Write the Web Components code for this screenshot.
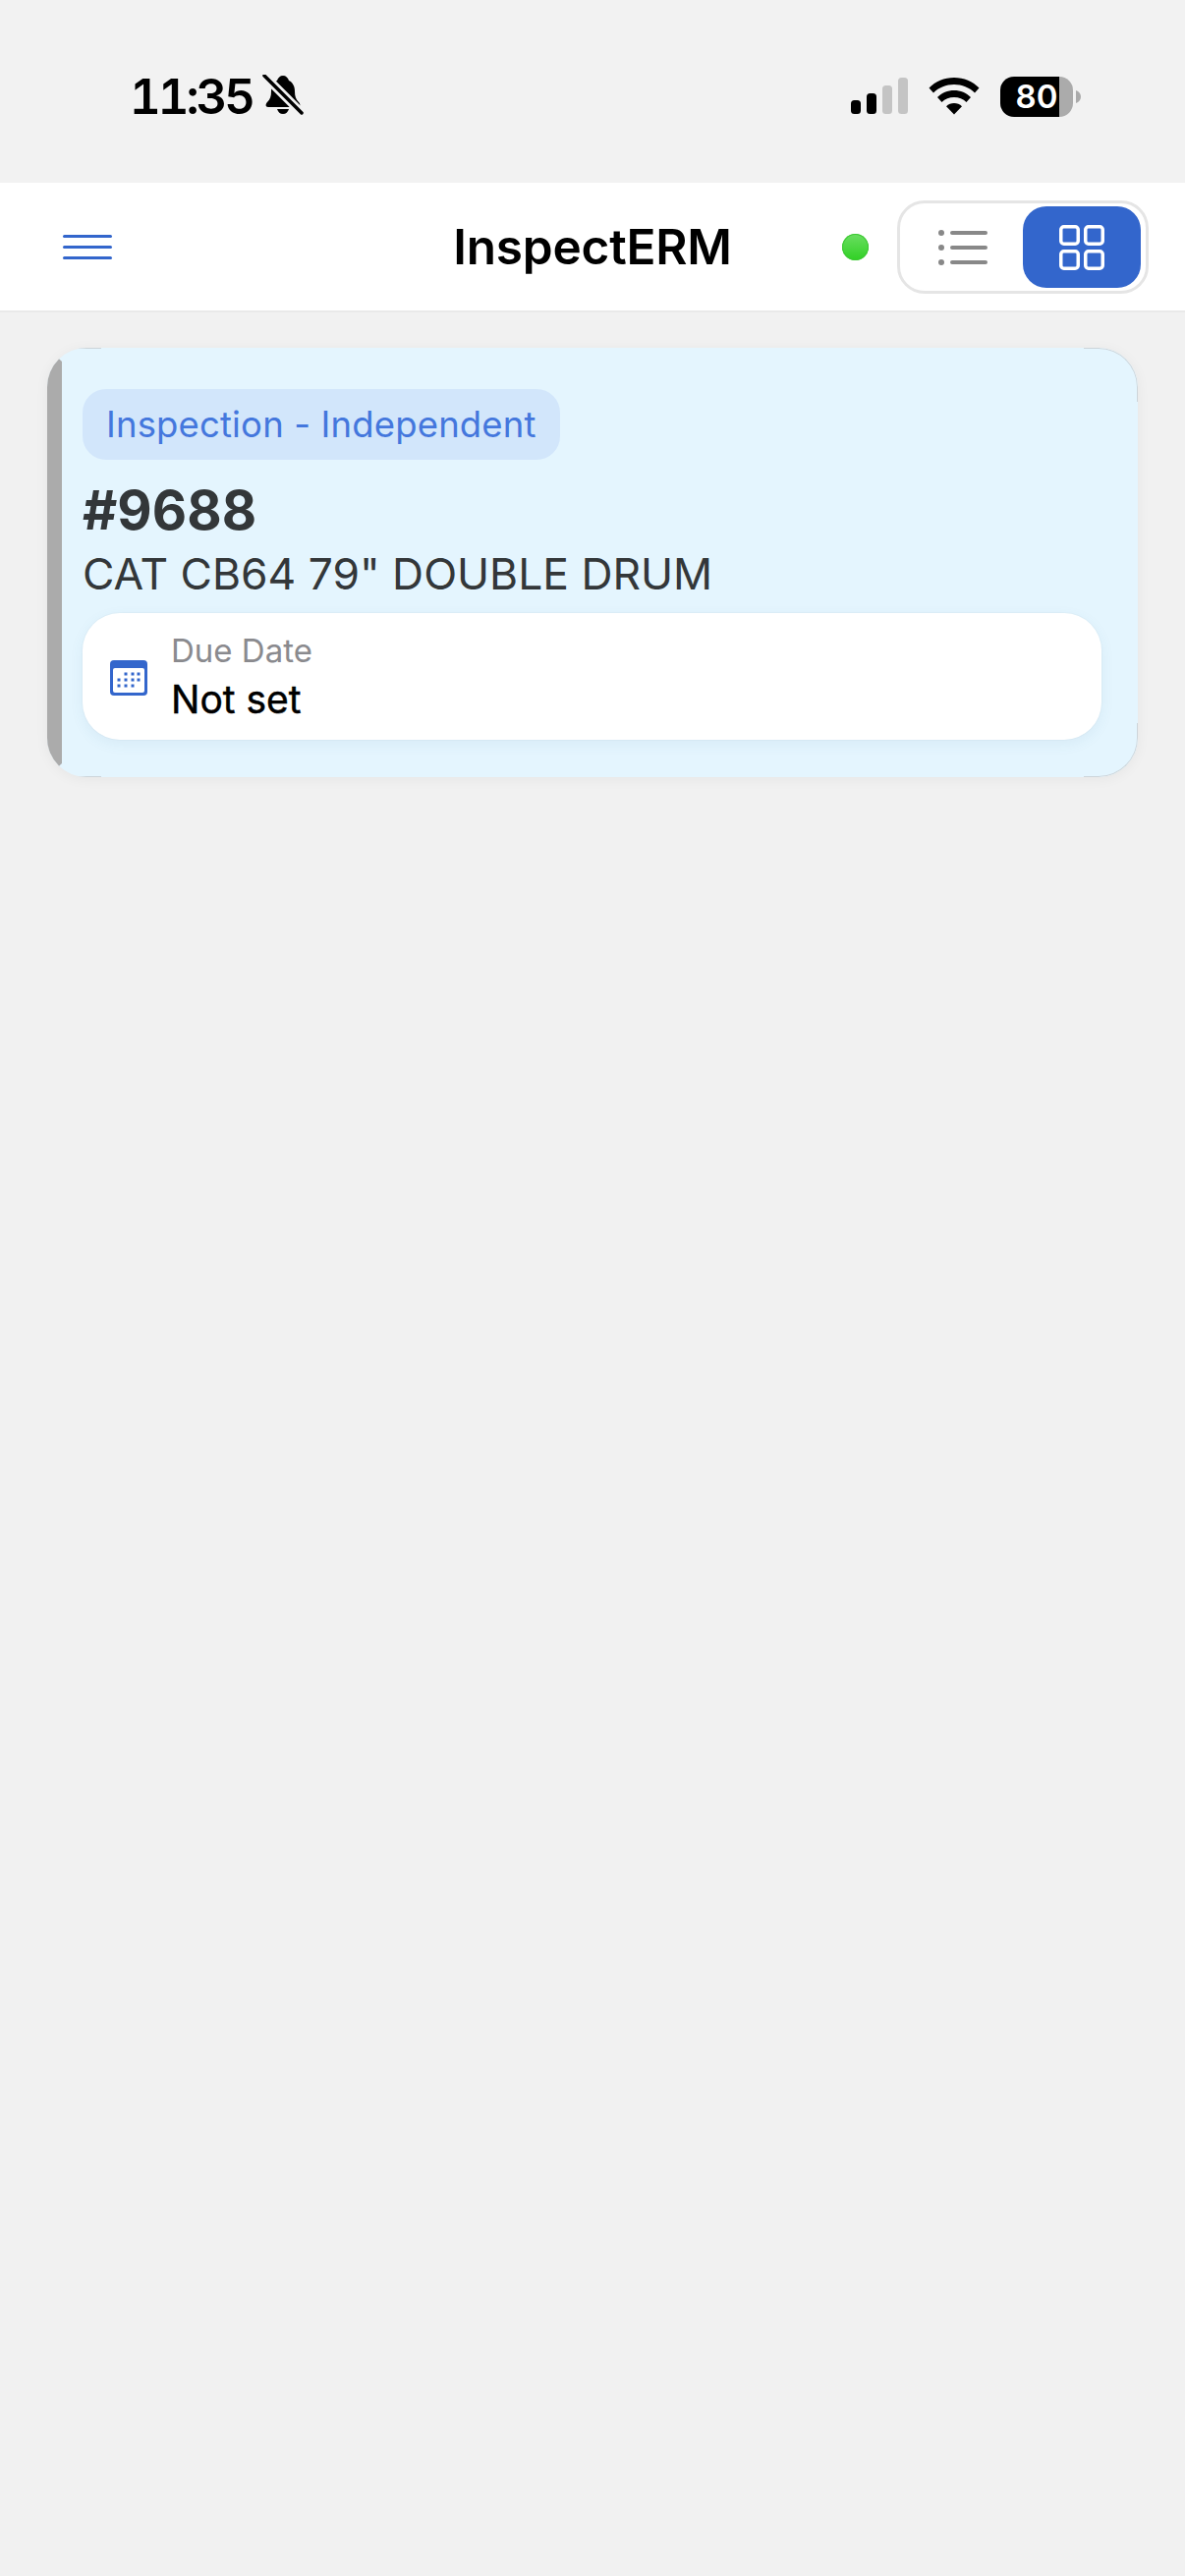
<!DOCTYPE html>
<html lang="en">
<head>
<meta charset="utf-8">
<title>InspectERM</title>
<style>
  html, body { margin: 0; padding: 0; }
  body {
    width: 1206px;
    min-height: 2622px;
    background: #f1f1f1;
    font-family: Inter, "Liberation Sans", sans-serif;
  }
</style>
</head>
<body>
<status-bar time="11:35" battery="80"></status-bar>
<app-header title="InspectERM"></app-header>
<main style="display:block;padding:36px 48px">
  <job-card tag="Inspection - Independent" number="#9688" name='CAT CB64 79" DOUBLE DRUM'>
    <info-tile label="Due Date" value="Not set"></info-tile>
  </job-card>
</main>

<script>
class StatusBar extends HTMLElement {
    connectedCallback() {
        const time = this.getAttribute("time") || "";
        const battery = this.getAttribute("battery") || "";
        this.attachShadow({ mode: "open" }).innerHTML = `
            <style>
                :host { display: flex; height: 186px; padding: 0 106px 0 132px; box-sizing: border-box; background: #f2f2f2; color: #000; justify-content: space-between; }
                .left, .right { display: flex; align-items: center; height: 196px; }
                .time { font-size: 49px; font-weight: 600; font-variant-numeric: tabular-nums; letter-spacing: -3px; line-height: 1; }
                .bell { margin-left: 10px; margin-top: -3px; }
                .right { gap: 21px; }
                .battery { position: relative; width: 74px; height: 41px; border-radius: 14px; overflow: hidden; background: linear-gradient(90deg, #000 60px, #ababab 60px); color: #fff; font-size: 33px; font-weight: 600; line-height: 41px; text-align: center; }
                .batt-wrap { display: flex; align-items: center; gap: 3px; }
            </style>
            <div class="left">
                <span class="time">${time}</span>
                <svg class="bell" width="42" height="42" viewBox="0 0 42 42">
                    <path d="M21 1c3 0 5 2 6 5 4 2 6 6 6 11 0 5 1 8 4 11 2 2 2 5-1 5H6c-3 0-3-3-1-5 3-3 4-6 4-11 0-5 2-9 6-11 1-3 3-5 6-5z" fill="#000"/>
                    <path d="M15 35h12c-1 3-3 5-6 5s-5-2-6-5z" fill="#000"/>
                    <path d="M2 1 40 39" stroke="#f2f2f2" stroke-width="9"/>
                    <path d="M2 1 40 39" stroke="#000" stroke-width="3.5" stroke-linecap="round"/>
                </svg>
            </div>
            <div class="right">
                <svg width="58" height="38" viewBox="0 0 58 38">
                    <rect x="0" y="23" width="10" height="14" rx="3.5" fill="#000"/>
                    <rect x="16" y="16" width="10" height="21" rx="3.5" fill="#000"/>
                    <rect x="32" y="8" width="10" height="29" rx="3.5" fill="#c4c4c4"/>
                    <rect x="48" y="0" width="10" height="37" rx="3.5" fill="#c4c4c4"/>
                </svg>
                <svg width="52" height="38" viewBox="0 0 52 38">
                    <path d="M26 0c10 0 19 4 25.500 10.500L47 15.500C41.500 10 34 7 26 7S10.500 10 5 15.500L.5 10.500C7 4 16 0 26 0z" fill="#000"/>
                    <path d="M26 13c6.500 0 12.500 2.500 17 7l-4.500 5c-3.300-3.200-7.700-5-12.500-5s-9.200 1.800-12.500 5L9 20c4.500-4.500 10.500-7 17-7z" fill="#000"/>
                    <path d="M26 26c3 0 5.800 1.200 8 3.200L26 37.500l-8-8.300c2.200-2 5-3.200 8-3.200z" fill="#000"/>
                </svg>
                <span class="batt-wrap">
                    <span class="battery">${battery}</span>
                    <svg width="5" height="13" viewBox="0 0 5 13"><path d="M0 0c3 1 5 3.500 5 6.500S3 12 0 13z" fill="#ababab"/></svg>
                </span>
            </div>
        `;
    }
}

class AppHeader extends HTMLElement {
    connectedCallback() {
        const title = this.getAttribute("title") || "";
        this.removeAttribute("title");
        this.attachShadow({ mode: "open" }).innerHTML = `
            <style>
                :host { display: grid; grid-template-columns: 1fr auto 1fr; align-items: center; height: 132px; box-sizing: border-box; background: #fff; border-bottom: 2px solid #e9e9e9; padding: 1px 37px 0; }
                .menu { display: flex; flex-direction: column; gap: 7.500px; width: 50px; margin-left: 27px; }
                .menu i { display: block; height: 3.500px; border-radius: 2px; background: #3366cc; }
                h1 { margin: 0; font-size: 49.500px; font-weight: 600; color: #000; line-height: 1; letter-spacing: -.2px; }
                .side { display: flex; align-items: center; justify-content: flex-end; gap: 29px; }
                .dot { width: 27px; height: 27px; border-radius: 50%; background: linear-gradient(#6bde62, #30d024); box-shadow: inset 0 0 0 1px #3cc832; }
            </style>
            <div class="menu"><i></i><i></i><i></i></div>
            <h1>${title}</h1>
            <div class="side">
                <span class="dot"></span>
                <view-toggle></view-toggle>
            </div>
        `;
    }
}

class ViewToggle extends HTMLElement {
    connectedCallback() {
        this.attachShadow({ mode: "open" }).innerHTML = `
            <style>
                :host { display: flex; width: 256px; height: 95px; box-sizing: border-box; border: 3px solid #e5e5e5; border-radius: 28px; padding: 3px 5px; background: #fff; }
                .opt { flex: 1; display: flex; align-items: center; justify-content: center; border-radius: 24px; padding-right: 2px; }
                .on { flex: none; width: 120px; background: #3366cc; padding-right: 0; }
            </style>
            <span class="opt">
                <svg width="50" height="36" viewBox="0 0 50 36" fill="#888">
                    <circle cx="3" cy="3" r="3"/><circle cx="3" cy="18" r="3"/><circle cx="3" cy="33" r="3"/>
                    <rect x="12" y="1" width="38" height="4" rx="2"/><rect x="12" y="16" width="38" height="4" rx="2"/><rect x="12" y="31" width="38" height="4" rx="2"/>
                </svg>
            </span>
            <span class="opt on">
                <svg width="46" height="46" viewBox="0 0 46 46" fill="none" stroke="#fff" stroke-width="3.500">
                    <rect x="1.750" y="1.750" width="17.500" height="17.500" rx="3"/><rect x="26.750" y="1.750" width="17.500" height="17.500" rx="3"/>
                    <rect x="1.750" y="26.750" width="17.500" height="17.500" rx="3"/><rect x="26.750" y="26.750" width="17.500" height="17.500" rx="3"/>
                </svg>
            </span>
        `;
    }
}

class JobCard extends HTMLElement {
    connectedCallback() {
        const tag = this.getAttribute("tag") || "";
        const number = this.getAttribute("number") || "";
        const name = this.getAttribute("name") || "";
        this.attachShadow({ mode: "open" }).innerHTML = `
            <style>
                :host { display: block; position: relative; height: 437px; box-sizing: border-box; padding: 42px 37px 38px 36px; background: #e4f5fe; border-radius: 40px; overflow: hidden; box-shadow: 0 2px 14px rgba(0,0,0,.05); color: #333739; }
                .bar { position: absolute; left: 0; top: 0; bottom: 0; width: 15px; background: #ababab; clip-path: polygon(0 0, 100% 14px, 100% calc(100% - 14px), 0 100%); }
                .corner { position: absolute; width: 55px; height: 55px; box-sizing: border-box; border: 0 solid #cdd5da; pointer-events: none; }
                .tl { left: 15px; top: 0; width: 40px; height: 20px; border-top-width: 1.500px; }
                .bl { left: 15px; bottom: 0; width: 40px; height: 20px; border-bottom-width: 1.500px; }
                .tr { right: 0; top: 0; border-width: 1.500px 1.500px 0 0; border-top-right-radius: 40px; }
                .br { right: 0; bottom: 0; border-width: 0 1.500px 1.500px 0; border-bottom-right-radius: 40px; }
                .tag { display: inline-block; height: 72px; box-sizing: border-box; padding: 0 24px; border-radius: 24px; background: #d2e6fb; color: #4477dd; font-size: 36.500px; letter-spacing: .15px; line-height: 72px; }
                h2 { margin: 21px 0 0; font-size: 54.500px; font-weight: 700; line-height: 60px; }
                p { margin: 10px 0 0; font-size: 44.400px; line-height: 50px; }
                ::slotted(info-tile) { margin-top: 15px; }
            </style>
            <span class="bar"></span>
            <span class="corner tl"></span><span class="corner bl"></span>
            <span class="corner tr"></span><span class="corner br"></span>
            <span class="tag">${tag}</span>
            <h2>${number}</h2>
            <p>${name}</p>
            <slot></slot>
        `;
    }
}

class InfoTile extends HTMLElement {
    connectedCallback() {
        const label = this.getAttribute("label") || "";
        const value = this.getAttribute("value") || "";
        this.attachShadow({ mode: "open" }).innerHTML = `
            <style>
                :host { display: flex; align-items: center; gap: 24px; height: 129px; box-sizing: border-box; padding: 0 28px; background: #fff; border-radius: 38px; box-shadow: 0 0 0 1px rgba(0,0,0,.02), 0 4px 14px rgba(60,110,150,.08); }
                svg { margin-top: 2px; }
                .label { font-size: 33px; line-height: 38px; color: #8a8a8e; }
                .value { font-size: 39px; font-weight: 400; -webkit-text-stroke: .45px #000; line-height: 46px; color: #000; margin-top: 8px; }
            </style>
            <svg width="38" height="36" viewBox="0 0 38 36">
                <rect width="38" height="36" rx="4" fill="#3366cc"/>
                <rect x="3" y="8" width="32" height="25" rx="2" fill="#fff"/>
                <g fill="#3366cc">
                    <rect x="14.500" y="12.500" width="3" height="3"/><rect x="21.500" y="12.500" width="3" height="3"/><rect x="27.500" y="12.500" width="3" height="3"/>
                    <rect x="7.500" y="18.500" width="3" height="3"/><rect x="14.500" y="18.500" width="3" height="3"/><rect x="21.500" y="18.500" width="3" height="3"/><rect x="27.500" y="18.500" width="3" height="3"/>
                    <rect x="7.500" y="24.500" width="3" height="3"/><rect x="14.500" y="24.500" width="3" height="3"/><rect x="21.500" y="24.500" width="3" height="3"/>
                </g>
            </svg>
            <div>
                <div class="label">${label}</div>
                <div class="value">${value}</div>
            </div>
        `;
    }
}

customElements.define("status-bar", StatusBar);
customElements.define("app-header", AppHeader);
customElements.define("view-toggle", ViewToggle);
customElements.define("job-card", JobCard);
customElements.define("info-tile", InfoTile);
</script>
</body>
</html>
